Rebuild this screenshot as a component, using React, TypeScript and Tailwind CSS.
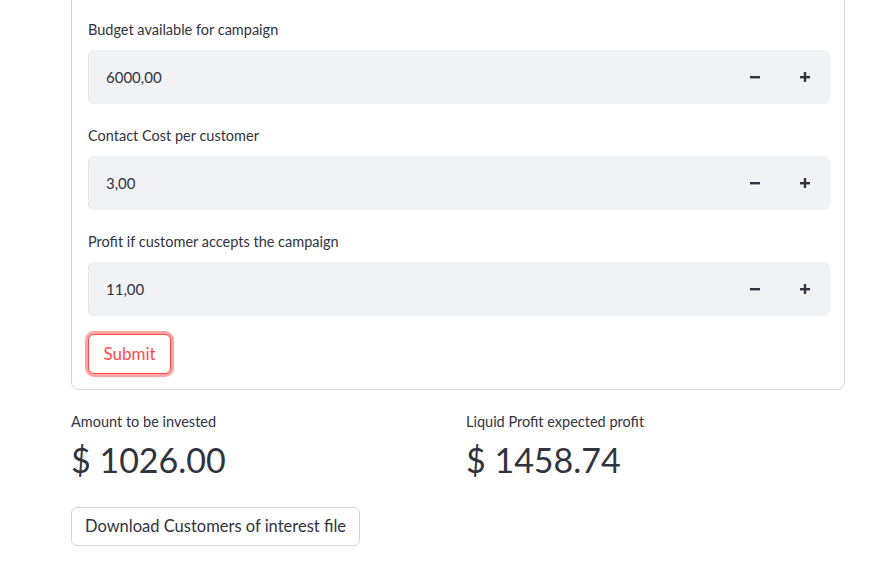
const fields = [
    { label: "Budget available for campaign", value: "6000,00" },
    { label: "Contact Cost per customer", value: "3,00" },
    { label: "Profit if customer accepts the campaign", value: "11,00" },
];

const metrics = [
    { label: "Amount to be invested", value: "$ 1026.00" },
    { label: "Liquid Profit expected profit", value: "$ 1458.74" },
];

function MinusIcon() {
    return (
        <svg width="10" height="10" viewBox="0 0 10 10">
            <rect x="0" y="4" width="10" height="2.4" fill="currentColor" />
        </svg>
    );
}

function PlusIcon() {
    return (
        <svg width="10" height="10" viewBox="0 0 10 10">
            <rect x="0" y="4" width="10" height="2.4" fill="currentColor" />
            <rect x="3.8" y="0" width="2.4" height="10" fill="currentColor" />
        </svg>
    );
}

function NumberField({ label, value }: { label: string; value: string }) {
    return (
        <div className="flex flex-col">
            <label className="h-[22px] text-[14.5px] leading-[24px] text-[#31333f]">{label}</label>
            <div className="mt-[10px] flex h-[54px] rounded-md bg-[#f0f2f6]">
                <div className="flex flex-1 items-center rounded-l-md border-l border-[#e4e6ec] pl-[17px] text-[15px] text-[#31333f]">
                    {value}
                </div>
                <button className="flex w-[50px] items-center justify-center text-[#31333f]">
                    <MinusIcon />
                </button>
                <button className="flex w-[50px] items-center justify-center text-[#31333f]">
                    <PlusIcon />
                </button>
            </div>
        </div>
    );
}

export default function App() {
    return (
        <div className="h-[579px] w-[890px] overflow-hidden bg-white font-['Lato',sans-serif] text-[#31333f]">
            <div className="ml-[71px] w-[774px]">
                {/* Form */}
                <div className="-mt-[10px] flex flex-col gap-[20px] rounded-lg border border-[#d5d6d9] pb-[15px] pl-4 pr-[14px] pt-[27px]">
                    {fields.map((f) => (
                        <NumberField key={f.label} label={f.label} value={f.value} />
                    ))}
                    <div className="-mt-[2px]">
                        <button className="h-[40px] w-[83px] rounded-md border border-[#ff4b4b] bg-white text-[17px] text-[#ff4b4b] shadow-[0_0_0_3px_rgba(255,75,75,0.5)]">
                            Submit
                        </button>
                    </div>
                </div>

                {/* Metrics */}
                <div className="mt-[22px] grid grid-cols-2 gap-4">
                    {metrics.map((m) => (
                        <div key={m.label}>
                            <div className="text-[14.5px] leading-[20px]">{m.label}</div>
                            <div className="mt-[6px] text-[34px] leading-[44px]">{m.value}</div>
                        </div>
                    ))}
                </div>

                <button className="mt-[25px] h-[39px] w-[289px] rounded-md border border-[#d5d6d9] bg-white text-[16.5px] text-[#31333f]">
                    Download Customers of interest file
                </button>
            </div>
        </div>
    );
}
